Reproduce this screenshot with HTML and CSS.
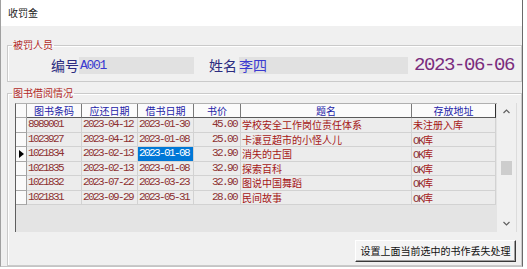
FILE: index.html
```html
<!DOCTYPE html>
<html lang="zh">
<head>
<meta charset="utf-8">
<title>收罚金</title>
<link rel="stylesheet" href="styles.css">
</head>
<body>
<div class="window">
  <div class="titlebar">收罚金</div>
  <fieldset class="group group-person">
    <legend>被罚人员</legend>
    <div class="person-row">
      <span class="label lbl-id">编号</span>
      <span class="field field-id">A001</span>
      <span class="label lbl-name">姓名</span>
      <span class="field field-name">李四</span>
      <span class="date">2023-06-06</span>
    </div>
  </fieldset>
  <fieldset class="group group-books">
    <legend>图书借阅情况</legend>
    <div class="grid">
      <div class="grid-main">
        <div class="row head">
          <div class="c ind"></div>
          <div class="c">图书条码</div>
          <div class="c">应还日期</div>
          <div class="c">借书日期</div>
          <div class="c">书价</div>
          <div class="c">题名</div>
          <div class="c last">存放地址</div>
        </div>
        <div class="row">
          <div class="c ind"></div>
          <div class="c num">8989001</div>
          <div class="c num">2023-04-12</div>
          <div class="c num">2023-01-30</div>
          <div class="c num price">45.00</div>
          <div class="c cn">学校安全工作岗位责任体系</div>
          <div class="c cn">未注册入库</div>
        </div>
        <div class="row">
          <div class="c ind"></div>
          <div class="c num">1023927</div>
          <div class="c num">2023-04-12</div>
          <div class="c num">2023-01-08</div>
          <div class="c num price">25.00</div>
          <div class="c cn">卡瀼豆超市的小怪人儿</div>
          <div class="c loc"><span class="ok">OK</span>库</div>
        </div>
        <div class="row">
          <div class="c ind"><span class="pointer"></span></div>
          <div class="c num">1021834</div>
          <div class="c num">2023-02-13</div>
          <div class="c num sel">2023-01-08</div>
          <div class="c num price">32.90</div>
          <div class="c cn">消失的古国</div>
          <div class="c loc"><span class="ok">OK</span>库</div>
        </div>
        <div class="row">
          <div class="c ind"></div>
          <div class="c num">1021835</div>
          <div class="c num">2023-02-13</div>
          <div class="c num">2023-01-08</div>
          <div class="c num price">32.90</div>
          <div class="c cn">探索百科</div>
          <div class="c loc"><span class="ok">OK</span>库</div>
        </div>
        <div class="row">
          <div class="c ind"></div>
          <div class="c num">1021832</div>
          <div class="c num">2023-07-22</div>
          <div class="c num">2023-03-23</div>
          <div class="c num price">32.90</div>
          <div class="c cn">图说中国舞蹈</div>
          <div class="c loc"><span class="ok">OK</span>库</div>
        </div>
        <div class="row">
          <div class="c ind"></div>
          <div class="c num">1021831</div>
          <div class="c num">2023-09-29</div>
          <div class="c num">2023-05-31</div>
          <div class="c num price">28.00</div>
          <div class="c cn">民间故事</div>
          <div class="c loc"><span class="ok">OK</span>库</div>
        </div>
      </div>
      <div class="vscroll">
        <div class="sbtn"><svg width="7" height="5" viewBox="0 0 7 5"><polyline points="0.5,4 3.5,1 6.5,4" fill="none" stroke="#606060" stroke-width="1.2"/></svg></div>
        <div class="track"><div class="thumb"></div></div>
        <div class="sbtn"><svg width="7" height="5" viewBox="0 0 7 5"><polyline points="0.5,1 3.5,4 6.5,1" fill="none" stroke="#606060" stroke-width="1.2"/></svg></div>
      </div>
    </div>
    <div class="actions">
      <button class="btn" type="button">设置上面当前选中的书作丢失处理</button>
    </div>
  </fieldset>
</div>
</body>
</html>
```

FILE: styles.css
```css
html, body {
  margin: 0;
  padding: 0;
  background: #ffffff;
}
body {
  width: 527px;
  height: 269px;
  overflow: hidden;
  font-family: "Noto Sans CJK SC", sans-serif;
}
.window {
  width: 523px;
  height: 267px;
  box-sizing: border-box;
  border-left: 1px solid #a0a0a0;
  border-right: 1px solid #6a6a6a;
  border-bottom: 1px solid #c4c4c4;
  background: #f0f0f0;
  display: flex;
  flex-direction: column;
}
.titlebar {
  flex: none;
  height: 26px;
  background: #ffffff;
  font-size: 10px;
  line-height: 26px;
  padding-left: 7px;
  color: #1a1a1a;
}
.group {
  margin: 0 0 0 6px;
  padding: 0;
  border: 1px solid #cacaca;
  box-shadow: inset 1px 1px 0 #ffffff;
  min-width: 0;
}
.group legend {
  margin-left: 4px;
  padding: 0 1px;
  font-size: 10px;
  line-height: 12px;
  color: #b22a28;
}
.group-person {
  margin-top: 13px;
}
.person-row {
  display: flex;
  align-items: center;
  height: 17px;
  margin: 6px 0 7px 0;
}
.label {
  font-size: 14px;
  line-height: 17px;
  color: #2c2c80;
}
.lbl-id {
  margin-left: 43px;
}
.lbl-name {
  margin-left: 15px;
}
.field {
  height: 17px;
  background: #e1e1e1;
  color: #3a3ad0;
  line-height: 17px;
}
.field-id {
  width: 114px;
  padding-left: 1px;
  font-family: "Liberation Mono", monospace;
  font-size: 13px;
  letter-spacing: -1.3px;
}
.field-name {
  width: 169px;
  margin-left: 2px;
  font-size: 14px;
}
.date {
  margin-left: 6px;
  font-family: "Liberation Mono", monospace;
  font-size: 19px;
  letter-spacing: -1.4px;
  line-height: 17px;
  color: #7a2c7e;
}
.group-books {
  margin-top: 5px;
}
.grid {
  display: flex;
  height: 129px;
  margin: 4px 4px 0 7px;
}
.grid-main {
  flex: 1;
  background: #e4e4e4;
  border-left: 1px solid #5e5e5e;
  border-top: 1px solid #b0b0b0;
}
.row {
  display: grid;
  grid-template-columns: 11px 55px 56px 56px 47px 171px 84px;
  height: 14.5px;
}
.row.head {
  height: 14px;
}
.c {
  box-sizing: border-box;
  border-right: 1px solid #d2d2d2;
  border-bottom: 1px solid #d2d2d2;
  background: #ececec;
  overflow: hidden;
  white-space: nowrap;
  padding-left: 1px;
}
.head .c {
  background: #fbfbfb;
  border-right: 1px solid #7a7a7a;
  border-bottom: 1px solid #5a5a5a;
  color: #2323a8;
  font-size: 10px;
  line-height: 13px;
  text-align: center;
  padding-left: 0;
}
.head .c.last {
  border-right: 1px solid #303030;
}
.c.ind {
  background: #fafafa;
  border-right: 1px solid #a0a0a0;
  border-bottom: 1px solid #a8a8a8;
  padding: 0;
  display: flex;
  align-items: center;
  justify-content: center;
}
.head .c.ind {
  background: #fafafa;
  border-right: 1px solid #a0a0a0;
}
.pointer {
  width: 0;
  height: 0;
  border-left: 5px solid #000000;
  border-top: 4px solid transparent;
  border-bottom: 4px solid transparent;
  margin-left: 1px;
}
.num {
  font-family: "Liberation Mono", monospace;
  font-size: 11px;
  letter-spacing: -1.6px;
  line-height: 13.5px;
  color: #8e3232;
}
.price {
  text-align: right;
  padding-right: 3px;
}
.sel {
  background: #0078d7;
  color: #ffffff;
}
.cn {
  font-size: 10px;
  line-height: 13.5px;
  color: #a51616;
}
.loc {
  font-size: 10px;
  line-height: 13.5px;
  color: #a51616;
}
.ok {
  font-family: "Liberation Mono", monospace;
  font-size: 11px;
  letter-spacing: -1.6px;
  color: #8e3232;
}
.vscroll {
  flex: none;
  width: 19px;
  background: #f0f0f0;
  border-right: 1px solid #dcdcdc;
  display: flex;
  flex-direction: column;
}
.sbtn {
  height: 17px;
  display: flex;
  align-items: center;
  justify-content: center;
}
.track {
  flex: 1;
}
.thumb {
  width: 11px;
  height: 14px;
  margin: 41px auto 0 auto;
  background: #cdcdcd;
}
.actions {
  display: flex;
  justify-content: flex-end;
  margin: 8px 5px 3px 0;
}
.btn {
  width: 161px;
  height: 22px;
  padding: 0;
  margin: 0;
  background: #f4f4f4;
  border-top: 1px solid #ffffff;
  border-left: 1px solid #ffffff;
  border-right: 1px solid #3a3a3a;
  border-bottom: 1px solid #3a3a3a;
  box-shadow: inset -1px -1px 0 #a0a0a0;
  font-family: "Noto Sans CJK SC", sans-serif;
  font-size: 10px;
  color: #111111;
  line-height: 20px;
}
```
